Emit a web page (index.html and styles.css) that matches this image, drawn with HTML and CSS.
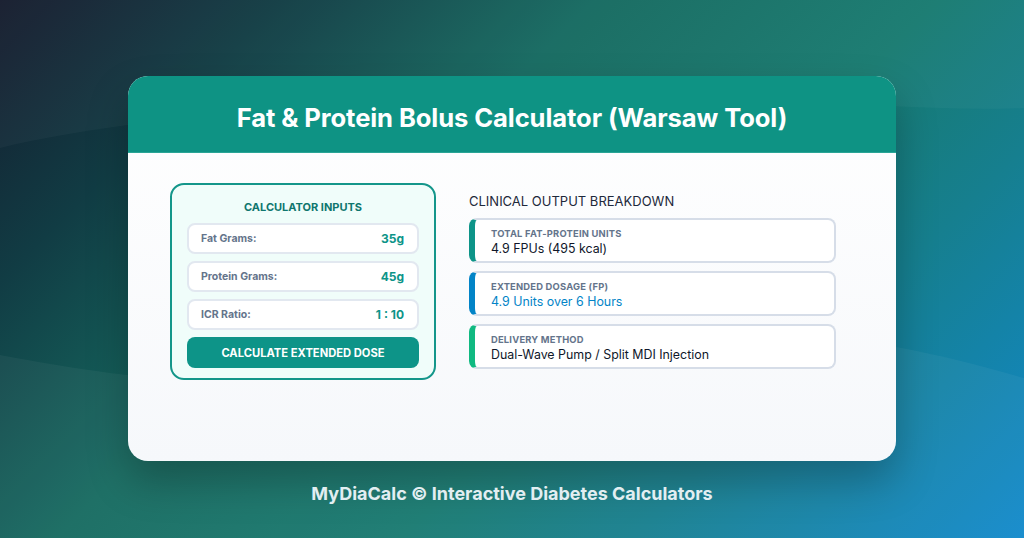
FILE: index.html
```html
<!DOCTYPE html>
<html lang="en">
<head>
  <meta charset="UTF-8">
  <title>Fat &amp; Protein Bolus Calculator</title>
  <link rel="stylesheet" href="styles.css">
</head>
<body>
  <svg class="backdrop" viewBox="0 0 1024 538" preserveAspectRatio="none" aria-hidden="true">
    <path d="M0,0 H1024 V108 C930,112 820,100 700,98 C520,95 300,105 150,122 C90,130 40,138 0,148 Z" fill="rgba(255,255,255,0.03)"/>
    <path d="M0,355 C80,370 140,378 220,384 C380,396 520,330 700,328 C820,328 930,350 1024,378 V538 H0 Z" fill="rgba(255,255,255,0.045)"/>
  </svg>

  <main class="card">
    <header class="card-header">
      <h1>Fat &amp; Protein Bolus Calculator (Warsaw Tool)</h1>
    </header>

    <section class="card-body">
      <div class="inputs-panel">
        <h2 class="panel-title">CALCULATOR INPUTS</h2>
        <div class="input-row">
          <span class="input-label">Fat Grams:</span>
          <span class="input-value">35g</span>
        </div>
        <div class="input-row">
          <span class="input-label">Protein Grams:</span>
          <span class="input-value">45g</span>
        </div>
        <div class="input-row">
          <span class="input-label">ICR Ratio:</span>
          <span class="input-value">1 : 10</span>
        </div>
        <button class="calc-btn">CALCULATE EXTENDED DOSE</button>
      </div>

      <div class="output-panel">
        <h2 class="output-title">CLINICAL OUTPUT BREAKDOWN</h2>
        <div class="result result-teal">
          <div class="result-label">TOTAL FAT-PROTEIN UNITS</div>
          <div class="result-value">4.9 FPUs (495 kcal)</div>
        </div>
        <div class="result result-blue">
          <div class="result-label">EXTENDED DOSAGE (FP)</div>
          <div class="result-value blue-text">4.9 Units over 6 Hours</div>
        </div>
        <div class="result result-green">
          <div class="result-label">DELIVERY METHOD</div>
          <div class="result-value">Dual-Wave Pump / Split MDI Injection</div>
        </div>
      </div>
    </section>
  </main>

  <footer class="footer">MyDiaCalc © Interactive Diabetes Calculators</footer>
</body>
</html>
```

FILE: styles.css
```css
html, body {
  margin: 0;
  height: 100%;
}
body {
  font-family: Inter, "Noto Sans", sans-serif;
  background: linear-gradient(135deg, #151b2d 0%, #113c44 18%, #156a60 38%, #177a70 60%, #167f8f 75%, #1189cc 100%);
  display: flex;
  flex-direction: column;
  align-items: center;
  padding-top: 76px;
  box-sizing: border-box;
  overflow: hidden;
  position: relative;
}

/* soft background swells */
.backdrop {
  position: absolute;
  left: 0;
  top: 0;
  width: 100%;
  height: 100%;
  pointer-events: none;
}

.card {
  width: 768px;
  height: 385px;
  border-radius: 20px;
  overflow: hidden;
  background: linear-gradient(180deg, #ffffff 0%, #f6f8fb 100%);
  box-shadow: 0 20px 40px rgba(0, 0, 0, 0.25);
  position: relative;
  z-index: 1;
}
.card-header {
  height: 77px;
  background: #0e9384;
  display: flex;
  align-items: center;
  justify-content: center;
  padding-top: 6px;
  border-bottom: 1px solid #2aa596;
  box-sizing: border-box;
}
.card-header h1 {
  margin: 0;
  color: #fff;
  font-size: 25.6px;
  font-weight: 700;
  letter-spacing: -0.1px;
}

.card-body {
  display: flex;
  gap: 33px;
  padding: 30px 0 0 42px;
}

.inputs-panel {
  width: 266px;
  box-sizing: border-box;
  border: 2px solid #14968a;
  border-radius: 14px;
  background: #f0fdfa;
  padding: 14px 15px 10px;
  display: flex;
  flex-direction: column;
  gap: 7px;
}
.panel-title {
  margin: 0 0 1px;
  text-align: center;
  font-size: 11px;
  font-weight: 700;
  color: #0f766e;
  line-height: 16px;
}
.input-row {
  height: 31px;
  box-sizing: border-box;
  border: 2px solid #e2e8f0;
  border-radius: 8px;
  background: #fff;
  display: flex;
  align-items: center;
  justify-content: space-between;
  padding: 0 13px 0 12px;
}
.input-label {
  font-size: 10.5px;
  font-weight: 700;
  color: #64748b;
}
.input-value {
  font-size: 12px;
  font-weight: 700;
  color: #0d9488;
}
.calc-btn {
  height: 31px;
  border: none;
  border-radius: 8px;
  background: #0d9488;
  color: #fff;
  font-family: inherit;
  font-size: 11.2px;
  font-weight: 700;
}

.output-panel {
  width: 367px;
  display: flex;
  flex-direction: column;
  gap: 8px;
}
.output-title {
  margin: 9px 0 0;
  font-size: 13px;
  font-weight: 400;
  color: #1e293b;
  line-height: 18px;
}
.result {
  height: 45px;
  box-sizing: border-box;
  border: 2px solid #d6dde8;
  border-left-width: 6px;
  border-radius: 8px;
  background: #fff;
  padding: 7px 0 0 16px;
}
.result-teal { border-left-color: #0d9488; }
.result-blue { border-left-color: #0284c7; }
.result-green { border-left-color: #10b981; }
.result-label {
  font-size: 9.4px;
  font-weight: 700;
  color: #64748b;
  line-height: 13px;
  letter-spacing: 0.2px;
}
.result-value {
  font-size: 12.4px;
  color: #0f172a;
  line-height: 17px;
}
.blue-text {
  color: #0284c7;
}

.footer {
  margin-top: 22px;
  color: #e2eef2;
  font-size: 18px;
  font-weight: 700;
  position: relative;
  z-index: 1;
}
```
